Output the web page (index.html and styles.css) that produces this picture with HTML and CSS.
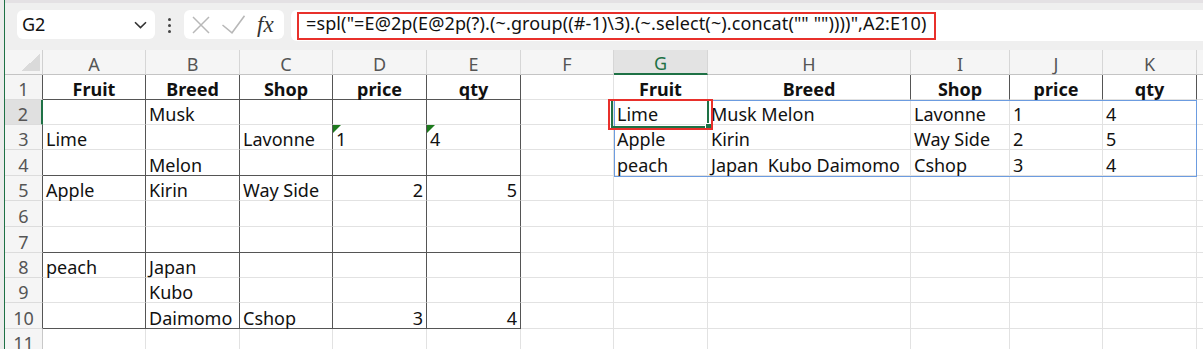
FILE: index.html
```html
<!DOCTYPE html>
<html lang="en">
<head>
  <meta charset="UTF-8">
  <meta name="viewport" content="width=device-width, initial-scale=1.0">
  <title>Sheet</title>
  <link rel="stylesheet" href="styles.css">
</head>
<body>
  <div class="app">
    <div class="edge"></div>
    <div class="main">
      <div class="toolbar">
        <div class="namebox">
          <span>G2</span>
          <svg class="chev" width="13" height="8" viewBox="0 0 13 8"><path d="M1 1.2 L6.5 6.6 L12 1.2" fill="none" stroke="#333" stroke-width="1.6"/></svg>
        </div>
        <div class="dots"><i></i><i></i><i></i></div>
        <div class="actions">
          <svg width="18" height="18" viewBox="0 0 18 18"><path d="M1 1 L17 17 M17 1 L1 17" stroke="#b8b8b8" stroke-width="1.5"/></svg>
          <svg class="tick" width="23" height="19" viewBox="0 0 23 19"><path d="M0.5 10 L10 17.8 L22.5 0.8" fill="none" stroke="#b8b8b8" stroke-width="1.5"/></svg>
          <span class="fx">fx</span>
        </div>
        <div class="formula">
          <div class="expr">=spl("=E@2p(E@2p(?).(~.group((#-1)\3).(~.select(~).concat("" ""))))",A2:E10)</div>
        </div>
      </div>

      <div class="sheet">
        <!-- column headers -->
        <div class="c corner"><span></span></div>
        <div class="c ch">A</div><div class="c ch">B</div><div class="c ch">C</div><div class="c ch">D</div><div class="c ch">E</div><div class="c ch">F</div><div class="c ch sel">G</div><div class="c ch">H</div><div class="c ch">I</div><div class="c ch">J</div><div class="c ch">K</div><div class="c ch"></div>

        <!-- 1 -->
        <div class="c rh rt">1</div>
        <div class="c t tb h">Fruit</div><div class="c t tb h">Breed</div><div class="c t tb h">Shop</div><div class="c t tb h">price</div><div class="c t tb h">qty</div>
        <div class="c"></div>
        <div class="c h">Fruit</div><div class="c t h">Breed</div><div class="c t h">Shop</div><div class="c t h">price</div><div class="c t h">qty</div>
        <div class="c"></div>

        <!-- 2 -->
        <div class="c rh rsel">2</div>
        <div class="c t"></div><div class="c t">Musk</div><div class="c t"></div><div class="c t"></div><div class="c t"></div>
        <div class="c"></div>
        <div class="c">Lime</div><div class="c">Musk Melon</div><div class="c">Lavonne</div><div class="c">1</div><div class="c">4</div>
        <div class="c"></div>

        <!-- 3 -->
        <div class="c rh rt">3</div>
        <div class="c t">Lime</div><div class="c t"></div><div class="c t">Lavonne</div><div class="c t flag">1</div><div class="c t flag">4</div>
        <div class="c"></div>
        <div class="c">Apple</div><div class="c">Kirin</div><div class="c">Way Side</div><div class="c">2</div><div class="c">5</div>
        <div class="c"></div>

        <!-- 4 -->
        <div class="c rh rt">4</div>
        <div class="c t tb"></div><div class="c t tb">Melon</div><div class="c t tb"></div><div class="c t tb"></div><div class="c t tb"></div>
        <div class="c"></div>
        <div class="c">peach</div><div class="c">Japan  Kubo Daimomo</div><div class="c">Cshop</div><div class="c">3</div><div class="c">4</div>
        <div class="c"></div>

        <!-- 5 -->
        <div class="c rh rt">5</div>
        <div class="c t">Apple</div><div class="c t">Kirin</div><div class="c t">Way Side</div><div class="c t r">2</div><div class="c t r">5</div>
        <div class="c"></div><div class="c"></div><div class="c"></div><div class="c"></div><div class="c"></div><div class="c"></div><div class="c"></div>

        <!-- 6 -->
        <div class="c rh rt">6</div>
        <div class="c t"></div><div class="c t"></div><div class="c t"></div><div class="c t"></div><div class="c t"></div>
        <div class="c"></div><div class="c"></div><div class="c"></div><div class="c"></div><div class="c"></div><div class="c"></div><div class="c"></div>

        <!-- 7 -->
        <div class="c rh rt">7</div>
        <div class="c t tb"></div><div class="c t tb"></div><div class="c t tb"></div><div class="c t tb"></div><div class="c t tb"></div>
        <div class="c"></div><div class="c"></div><div class="c"></div><div class="c"></div><div class="c"></div><div class="c"></div><div class="c"></div>

        <!-- 8 -->
        <div class="c rh rt">8</div>
        <div class="c t">peach</div><div class="c t">Japan</div><div class="c t"></div><div class="c t"></div><div class="c t"></div>
        <div class="c"></div><div class="c"></div><div class="c"></div><div class="c"></div><div class="c"></div><div class="c"></div><div class="c"></div>

        <!-- 9 -->
        <div class="c rh rt">9</div>
        <div class="c t"></div><div class="c t">Kubo</div><div class="c t"></div><div class="c t"></div><div class="c t"></div>
        <div class="c"></div><div class="c"></div><div class="c"></div><div class="c"></div><div class="c"></div><div class="c"></div><div class="c"></div>

        <!-- 10 -->
        <div class="c rh rt">10</div>
        <div class="c t tb"></div><div class="c t tb">Daimomo</div><div class="c t tb">Cshop</div><div class="c t tb r">3</div><div class="c t tb r">4</div>
        <div class="c"></div><div class="c"></div><div class="c"></div><div class="c"></div><div class="c"></div><div class="c"></div><div class="c"></div>

        <!-- 11 -->
        <div class="c rh">11</div>
        <div class="c"></div><div class="c"></div><div class="c"></div><div class="c"></div><div class="c"></div>
        <div class="c"></div><div class="c"></div><div class="c"></div><div class="c"></div><div class="c"></div><div class="c"></div><div class="c"></div>

        <!-- selection overlays -->
        <div class="range"></div>
        <div class="cursor"><span class="handle"></span></div>
        <div class="mark"></div>
      </div>
    </div>
  </div>
</body>
</html>
```

FILE: styles.css
```css
body {
  margin: 0;
  font-family: "Noto Sans", "DejaVu Sans", sans-serif;
  font-size: 18px;
  color: #111;
  background: #fff;
}

.app {
  display: flex;
  height: 349px;
  overflow: hidden;
}

.edge {
  width: 4px;
  background: #ececec;
  border-right: 1px solid #1e7145;
}

.main {
  flex: 1;
  min-width: 0;
}

/* formula bar */
.toolbar {
  height: 50px;
  box-sizing: border-box;
  border-top: 3px solid #e4e1e4;
  background: #efefef;
  display: flex;
  align-items: flex-start;
  padding: 7px 0 0 12px;
}

.namebox {
  width: 138px;
  height: 29px;
  box-sizing: border-box;
  background: #fff;
  border-radius: 6px;
  display: flex;
  align-items: center;
  justify-content: space-between;
  padding: 0 8px 0 5px;
  line-height: 29px;
}

.dots {
  width: 4px;
  margin: 8px 12px 0 13px;
  display: flex;
  flex-direction: column;
  gap: 3px;
}

.dots i {
  width: 3px;
  height: 3px;
  border-radius: 50%;
  background: #444;
}

.actions {
  width: 100px;
  height: 29px;
  box-sizing: border-box;
  background: #fff;
  border-radius: 6px;
  display: flex;
  align-items: center;
  padding-left: 8px;
}

.actions .tick {
  margin-left: 12px;
}

.fx {
  margin-left: 12px;
  font-family: "Liberation Serif", serif;
  font-style: italic;
  font-size: 23px;
  color: #333;
  line-height: 29px;
}

.formula {
  flex: 1;
  height: 31px;
  margin-left: 7px;
  padding: 2px 0 0 6px;
  box-sizing: border-box;
  background: #fff;
  border-radius: 6px 0 0 6px;
}

.expr {
  width: 639px;
  height: 28px;
  box-sizing: border-box;
  border: 2px solid #e8302b;
  padding: 0 0 0 7px;
  line-height: 18px;
  letter-spacing: 0.12px;
  white-space: pre;
  overflow: hidden;
}

/* grid */
.sheet {
  position: relative;
  display: grid;
  grid-template-columns: 38px 103px 94px 93px 94px 94px 93px 94px 203px 99px 93px 94px 1fr;
  grid-template-rows: 25px 25px 25px 25px 26px 25px 26px 26px 25px 25px 26px 25px;
}

.c {
  position: relative;
  box-sizing: border-box;
  border-right: 1px solid #e2e2e2;
  border-bottom: 1px solid #e2e2e2;
  padding: 0 3px;
  display: flex;
  align-items: flex-end;
  line-height: 19px;
  white-space: pre;
}

.corner {
  background: #f5f5f5;
  border-right-color: #d0d0d0;
  border-bottom-color: #c4c4c4;
  justify-content: flex-end;
  padding: 0 2px 3px 0;
}

.corner span {
  width: 19px;
  height: 17px;
  background: linear-gradient(to bottom right, transparent 50%, #dadada 50%);
}

.ch {
  background: #f5f5f5;
  color: #555;
  justify-content: center;
  border-right-color: #d6d6d6;
  border-bottom-color: #c4c4c4;
}

.ch.sel {
  background: #e3e3e3;
  color: #1e7145;
  border-bottom: 2px solid #1e7145;
}

.rh {
  background: #f5f5f5;
  color: #555;
  justify-content: center;
  border-right-color: #c8c8c8;
  border-bottom-color: #dcdcdc;
}

.rh.rt {
  border-right-color: #555;
}

.rh.rsel {
  background: #e0e0e0;
  border-right: 2px solid #1e7145;
}

.t {
  border-right-color: #555;
}

.tb {
  border-bottom-color: #555;
}

.h {
  font-weight: bold;
  justify-content: center;
}

.r {
  justify-content: flex-end;
}

.flag::before {
  content: "";
  position: absolute;
  top: 0;
  left: 0;
  border-top: 8px solid #1d7a1d;
  border-right: 8px solid transparent;
}

/* overlays */
.range {
  position: absolute;
  left: 609px;
  top: 50px;
  width: 583px;
  height: 77px;
  box-sizing: border-box;
  border: 1px solid #6c9ce0;
}

.cursor {
  position: absolute;
  left: 606px;
  top: 49px;
  width: 98px;
  height: 29px;
  box-sizing: border-box;
  border: 2px solid #1e7145;
}

.handle {
  position: absolute;
  right: -5px;
  bottom: -4px;
  width: 5px;
  height: 5px;
  background: #1e7145;
  border: 1px solid #fff;
}

.mark {
  position: absolute;
  left: 603px;
  top: 49px;
  width: 105px;
  height: 31px;
  box-sizing: border-box;
  border: 2px solid #e8302b;
}
```
